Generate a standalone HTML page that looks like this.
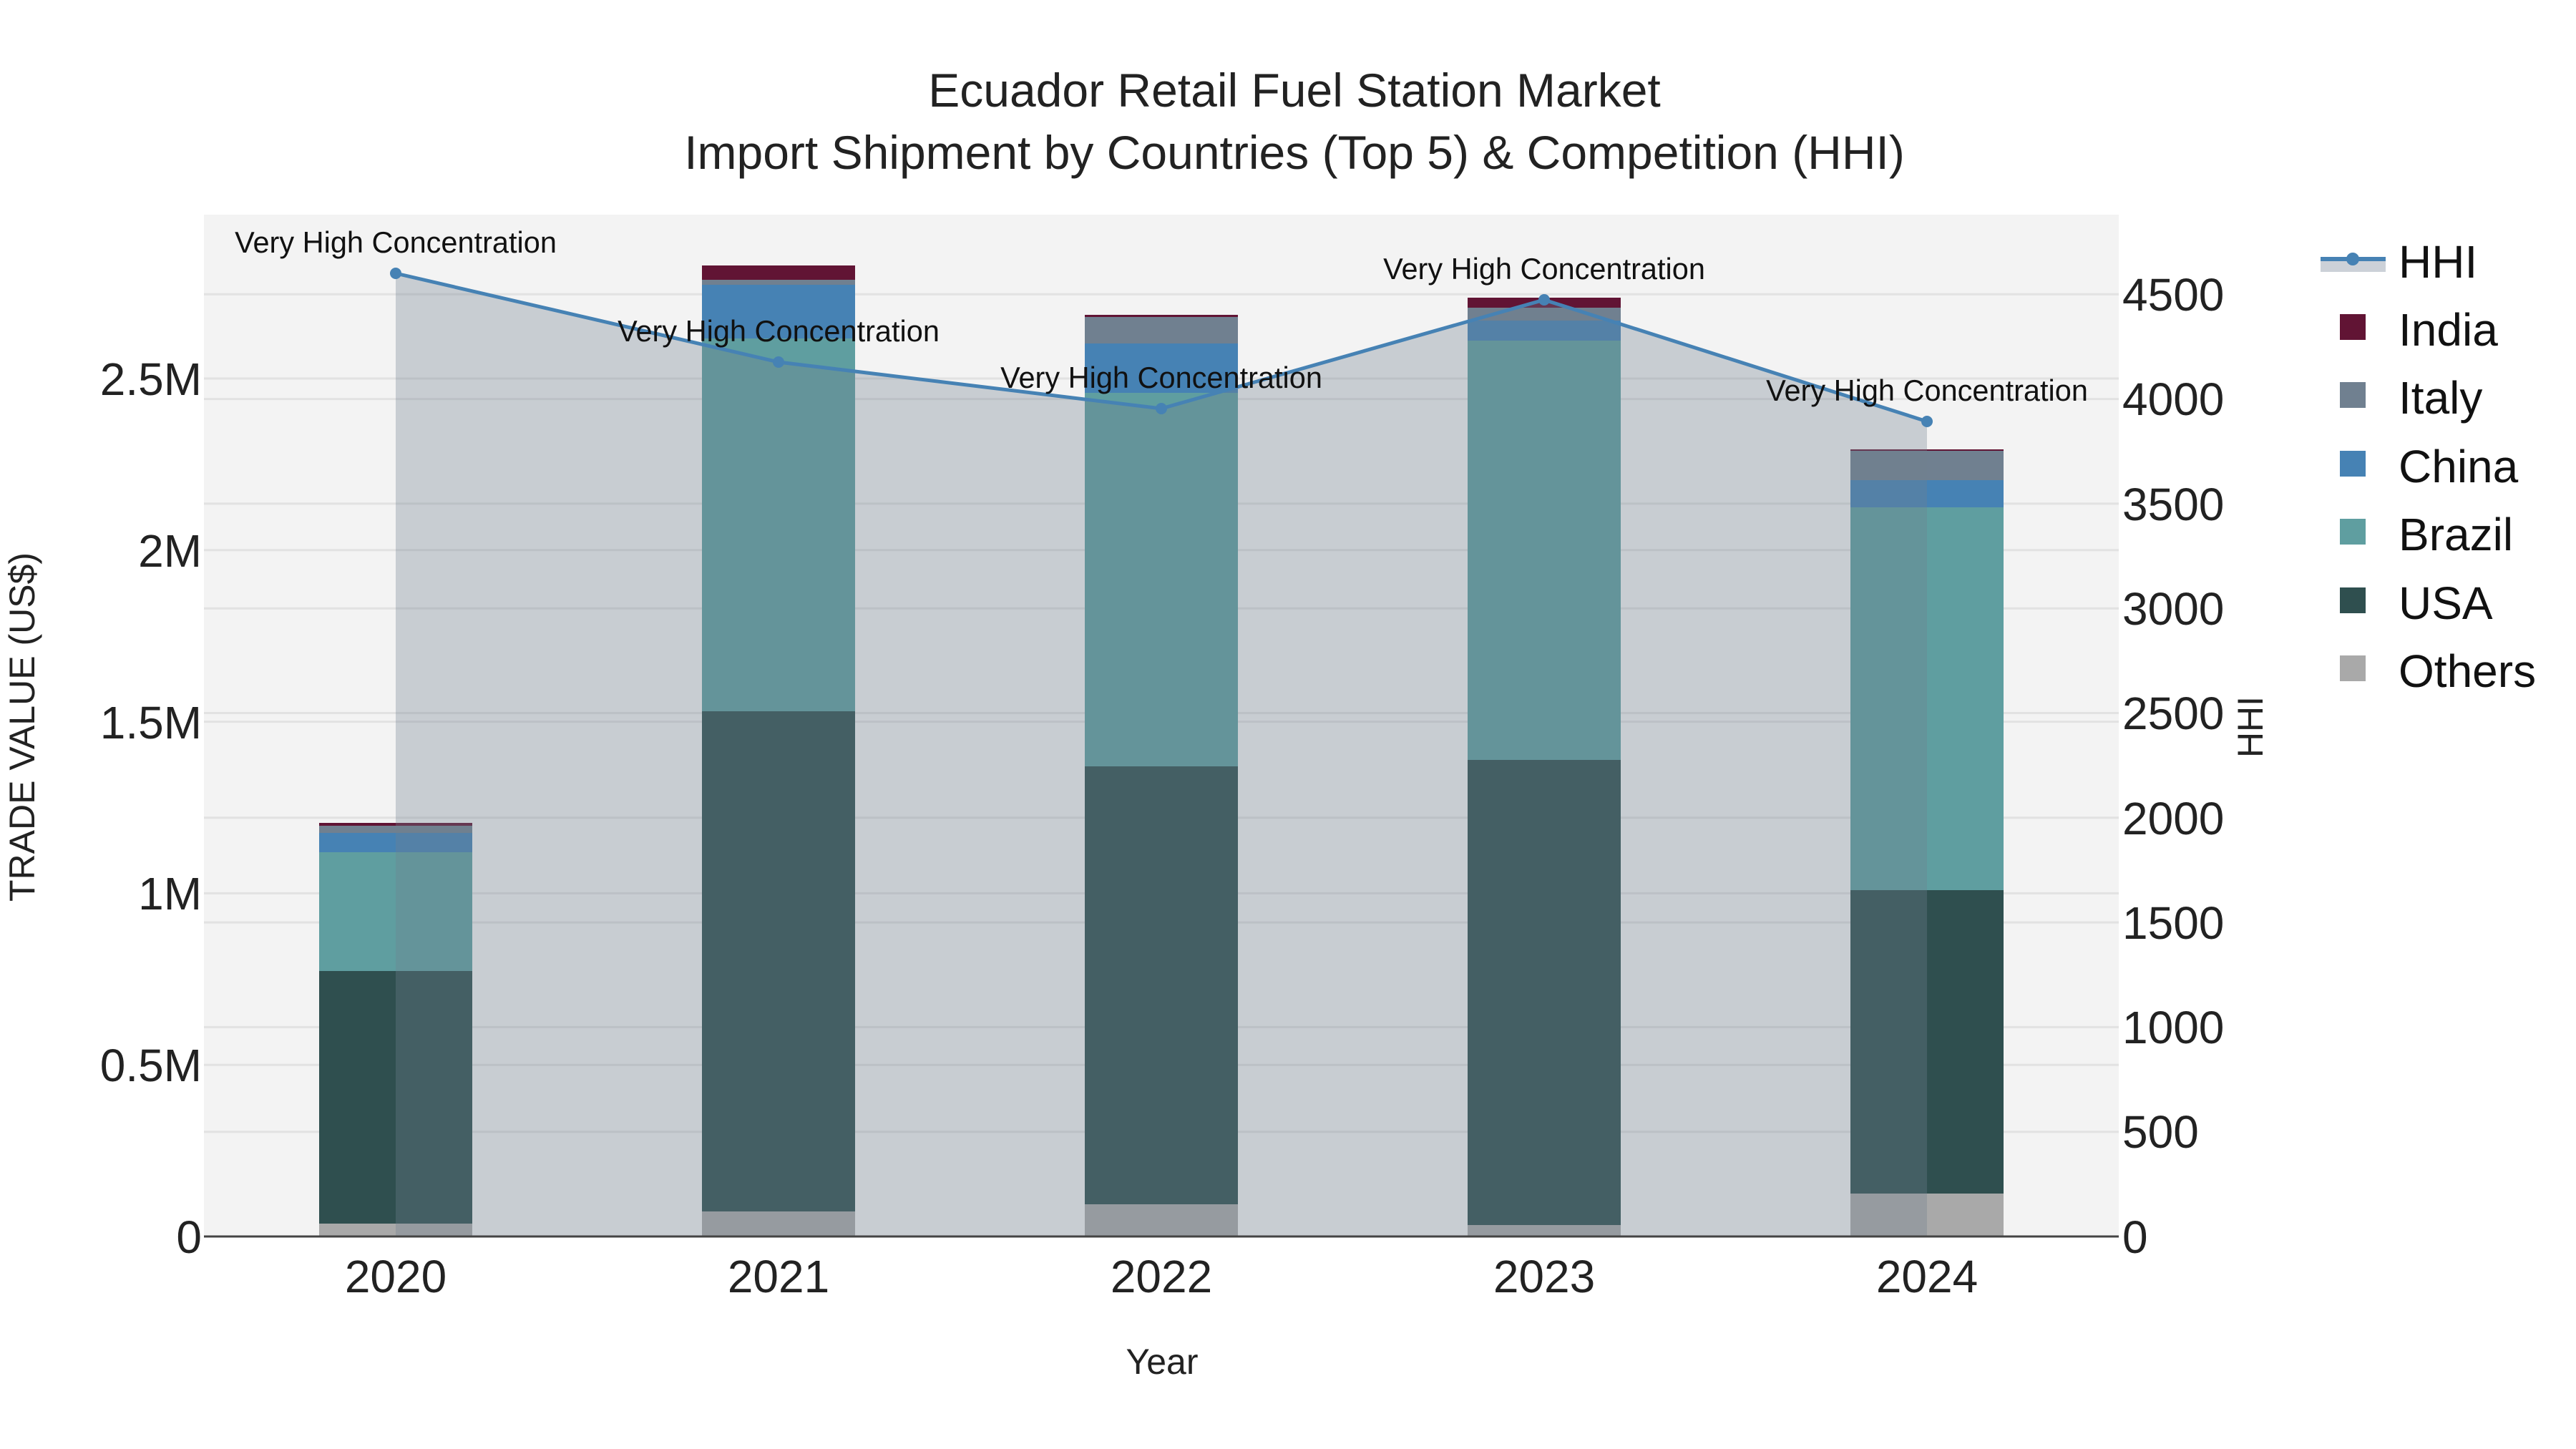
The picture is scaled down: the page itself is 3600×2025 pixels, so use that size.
<!DOCTYPE html>
<html><head><meta charset="utf-8"><style>
html,body{margin:0;padding:0;background:#fff;}
svg{display:block;font-family:"Liberation Sans",Arial,sans-serif;}
</style></head><body>
<svg width="3600" height="2025" viewBox="0 0 3600 2025" xmlns="http://www.w3.org/2000/svg">
<rect width="3600" height="2025" fill="#fff"/>
<text x="1809" y="149" font-size="66" text-anchor="middle" fill="#222">Ecuador Retail Fuel Station Market</text>
<text x="1809" y="236" font-size="66" text-anchor="middle" fill="#222">Import Shipment by Countries (Top 5) &amp; Competition (HHI)</text>
<rect x="285" y="300" width="2676" height="1428" fill="#f3f3f3"/>
<g stroke="#e2e2e2" stroke-width="3">
<line x1="285" x2="2961" y1="1488.2" y2="1488.2"/><line x1="285" x2="2961" y1="1248.4" y2="1248.4"/>
<line x1="285" x2="2961" y1="1008.6" y2="1008.6"/><line x1="285" x2="2961" y1="768.8" y2="768.8"/>
<line x1="285" x2="2961" y1="529" y2="529"/>
<line x1="285" x2="2961" y1="1581.7" y2="1581.7"/><line x1="285" x2="2961" y1="1435.4" y2="1435.4"/>
<line x1="285" x2="2961" y1="1289.1" y2="1289.1"/><line x1="285" x2="2961" y1="1142.8" y2="1142.8"/>
<line x1="285" x2="2961" y1="996.5" y2="996.5"/><line x1="285" x2="2961" y1="850.2" y2="850.2"/>
<line x1="285" x2="2961" y1="703.9" y2="703.9"/><line x1="285" x2="2961" y1="557.6" y2="557.6"/>
<line x1="285" x2="2961" y1="411.3" y2="411.3"/>
</g>
<g>
<rect x="446" y="1710" width="214" height="18" fill="#a9a9a9"/>
<rect x="446" y="1357" width="214" height="353" fill="#2f4f4f"/>
<rect x="446" y="1191" width="214" height="166" fill="#5f9ea0"/>
<rect x="446" y="1164" width="214" height="27" fill="#4682b4"/>
<rect x="446" y="1154" width="214" height="10" fill="#708090"/>
<rect x="446" y="1150" width="214" height="4" fill="#611434"/>

<rect x="981" y="1693" width="214" height="35" fill="#a9a9a9"/>
<rect x="981" y="994" width="214" height="699" fill="#2f4f4f"/>
<rect x="981" y="473" width="214" height="521" fill="#5f9ea0"/>
<rect x="981" y="398" width="214" height="75" fill="#4682b4"/>
<rect x="981" y="391" width="214" height="7" fill="#708090"/>
<rect x="981" y="371" width="214" height="20" fill="#611434"/>

<rect x="1516" y="1683" width="214" height="45" fill="#a9a9a9"/>
<rect x="1516" y="1071" width="214" height="612" fill="#2f4f4f"/>
<rect x="1516" y="549" width="214" height="522" fill="#5f9ea0"/>
<rect x="1516" y="480" width="214" height="69" fill="#4682b4"/>
<rect x="1516" y="443" width="214" height="37" fill="#708090"/>
<rect x="1516" y="440" width="214" height="3" fill="#611434"/>

<rect x="2051" y="1712" width="214" height="16" fill="#a9a9a9"/>
<rect x="2051" y="1062" width="214" height="650" fill="#2f4f4f"/>
<rect x="2051" y="476" width="214" height="586" fill="#5f9ea0"/>
<rect x="2051" y="448" width="214" height="28" fill="#4682b4"/>
<rect x="2051" y="430" width="214" height="18" fill="#708090"/>
<rect x="2051" y="416" width="214" height="14" fill="#611434"/>

<rect x="2586" y="1668" width="214" height="60" fill="#a9a9a9"/>
<rect x="2586" y="1244" width="214" height="424" fill="#2f4f4f"/>
<rect x="2586" y="709" width="214" height="535" fill="#5f9ea0"/>
<rect x="2586" y="671" width="214" height="38" fill="#4682b4"/>
<rect x="2586" y="630" width="214" height="41" fill="#708090"/>
<rect x="2586" y="628" width="214" height="2" fill="#611434"/>
</g>
<polygon points="553,1728 553,382 1088,506 1623,571 2158,419 2693,589 2693,1728" fill="rgba(112,128,144,0.33)"/>
<polyline points="553,382 1088,506 1623,571 2158,419 2693,589" fill="none" stroke="#4682b4" stroke-width="5"/>
<g fill="#4682b4"><circle cx="553" cy="382" r="8"/><circle cx="1088" cy="506" r="8"/><circle cx="1623" cy="571" r="8"/><circle cx="2158" cy="419" r="8"/><circle cx="2693" cy="589" r="8"/></g>
<g font-size="41.5" text-anchor="middle" fill="#111">
<text x="553" y="353">Very High Concentration</text>
<text x="1088" y="477">Very High Concentration</text>
<text x="1623" y="542">Very High Concentration</text>
<text x="2158" y="390">Very High Concentration</text>
<text x="2693" y="560">Very High Concentration</text>
</g>
<line x1="285" x2="2961" y1="1728" y2="1728" stroke="#444" stroke-width="3"/>
<g font-size="64" text-anchor="end" fill="#222">
<text x="282" y="1751">0</text><text x="282" y="1511">0.5M</text><text x="282" y="1271">1M</text>
<text x="282" y="1032">1.5M</text><text x="282" y="792">2M</text><text x="282" y="552">2.5M</text>
</g>
<g font-size="64" fill="#222">
<text x="2966" y="1751">0</text><text x="2966" y="1604">500</text><text x="2966" y="1458">1000</text>
<text x="2966" y="1312">1500</text><text x="2966" y="1166">2000</text><text x="2966" y="1019">2500</text>
<text x="2966" y="873">3000</text><text x="2966" y="727">3500</text><text x="2966" y="580">4000</text>
<text x="2966" y="434">4500</text>
</g>
<g font-size="64" text-anchor="middle" fill="#222">
<text x="553" y="1806">2020</text><text x="1088" y="1806">2021</text><text x="1623" y="1806">2022</text>
<text x="2158" y="1806">2023</text><text x="2693" y="1806">2024</text>
</g>
<text x="1624" y="1920" font-size="50" text-anchor="middle" fill="#222">Year</text>
<text transform="translate(48,1016) rotate(-90)" font-size="50" text-anchor="middle" fill="#222">TRADE VALUE (US$)</text>
<text transform="translate(3162,1016) rotate(-90)" font-size="50" text-anchor="middle" fill="#222">HHI</text>
<rect x="3243" y="362" width="91" height="18" fill="#ccd1d8"/>
<line x1="3243" x2="3334" y1="362" y2="362" stroke="#4682b4" stroke-width="6"/>
<circle cx="3288" cy="362" r="9" fill="#4682b4"/>
<g font-size="64" fill="#111">
<text x="3352" y="388">HHI</text>
<text x="3352" y="483">India</text>
<text x="3352" y="578">Italy</text>
<text x="3352" y="674">China</text>
<text x="3352" y="769">Brazil</text>
<text x="3352" y="865">USA</text>
<text x="3352" y="960">Others</text>
</g>
<rect x="3270" y="439" width="36" height="36" fill="#611434"/>
<rect x="3270" y="534" width="36" height="36" fill="#708090"/>
<rect x="3270" y="630" width="36" height="36" fill="#4682b4"/>
<rect x="3270" y="725" width="36" height="36" fill="#5f9ea0"/>
<rect x="3270" y="821" width="36" height="36" fill="#2f4f4f"/>
<rect x="3270" y="916" width="36" height="36" fill="#a9a9a9"/>
</svg>
</body></html>
